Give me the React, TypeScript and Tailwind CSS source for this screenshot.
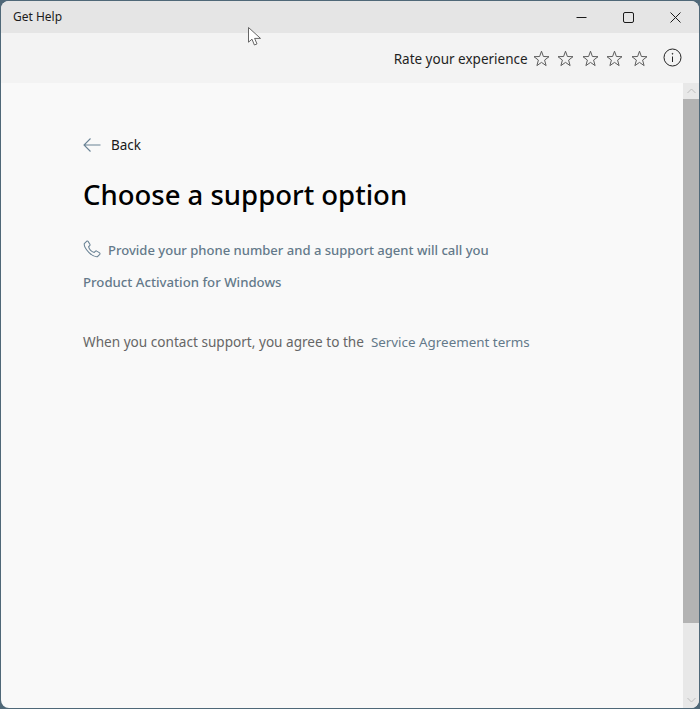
import React from 'react'

const font = { fontFamily: '"Noto Sans", sans-serif' }

function Star() {
  return (
    <svg width="17" height="17" viewBox="0 0 17 17" fill="none" stroke="#5c5c5c" strokeWidth="1" strokeLinejoin="round">
      <path d="M8.5 1.2 10.4 6.5 16 6.7 11.6 10.1 13.1 15.6 8.5 12.4 3.9 15.6 5.4 10.1 1 6.7 6.6 6.5Z" />
    </svg>
  )
}

function Cursor() {
  return (
    <svg className="absolute left-[248px] top-[27px]" width="14" height="20" viewBox="0 0 14 20" fill="#fff" stroke="#555" strokeWidth="0.9">
      <path d="M0.5 0.5V15.2L4 12.2 6.4 18 9 16.9 6.6 11.4H12.5Z" />
    </svg>
  )
}

export default function App() {
  return (
    <div className="relative h-[709px] w-[700px] overflow-hidden bg-[#4f6878]">
      <div className="ml-px mt-px flex h-[707px] w-[698px] flex-col overflow-hidden rounded-[8px] bg-[#f9f9f9]" style={font}>
        <div className="flex h-[32px] shrink-0 items-center justify-between bg-[#e5e5e5] pl-3 text-[#1c1c1c]">
          <span className="text-[12px]">Get Help</span>
          <div className="flex items-center">
            <div className="flex h-[32px] w-[47px] items-center justify-center">
              <svg width="11" height="11" viewBox="0 0 11 11" stroke="#1a1a1a" strokeWidth="1"><path d="M0.5 5.5H10.5" /></svg>
            </div>
            <div className="flex h-[32px] w-[47px] items-center justify-center">
              <svg width="11" height="11" viewBox="0 0 11 11" fill="none" stroke="#1a1a1a" strokeWidth="1"><rect x="0.5" y="0.5" width="10" height="10" rx="1.5" /></svg>
            </div>
            <div className="flex h-[32px] w-[47px] items-center justify-center">
              <svg width="11" height="11" viewBox="0 0 11 11" stroke="#1a1a1a" strokeWidth="1"><path d="M0.5 0.5 10.5 10.5M10.5 0.5 0.5 10.5" /></svg>
            </div>
          </div>
        </div>
        <div className="flex h-[50px] shrink-0 items-center justify-end bg-[#f3f3f3] pr-[17px]">
          <span className="mr-[5px] mt-[2px] text-[13.5px] text-[#1f1f1f]">Rate your experience</span>
          <div className="flex gap-[7.6px]">
            <Star /><Star /><Star /><Star /><Star />
          </div>
          <svg className="mb-[2px] ml-[15px]" width="19" height="19" viewBox="0 0 19 19" fill="none" stroke="#222" strokeWidth="1">
            <circle cx="9.5" cy="9.5" r="8.5" />
            <path d="M9.5 8.5V14" />
            <circle cx="9.5" cy="5.8" r="0.4" fill="#222" />
          </svg>
        </div>
        <div className="flex min-h-0 flex-1">
          <div className="flex-1 pl-[82px] pt-[50px]">
            <div className="flex h-[24px] items-center gap-[10px]">
              <svg className="mb-[1px]" width="18" height="14" viewBox="0 0 18 14" fill="none" stroke="#6b8496" strokeWidth="1.1"><path d="M17.5 7H1M7.5 0.5 1 7 7.5 13.5" /></svg>
              <span className="text-[13.5px] text-[#1a1a1a]">Back</span>
            </div>
            <h1 className="mt-[19px] text-[27.5px] leading-[38px] font-medium text-black">Choose a support option</h1>
            <div className="mt-[26px] flex h-[22px] items-center gap-[7px] text-[13.05px] font-medium text-[#64798a]">
              <svg className="mb-[4px]" width="18" height="18" viewBox="0 0 17 17" fill="none" stroke="#6b8496" strokeWidth="1"><path d="M1.2 3.5 3.4 1.2C3.9.8 4.5.9 4.8 1.3L6.5 4C6.8 4.5 6.7 5 6.3 5.4L5.3 6.4C5.9 8.6 8.2 11 10.6 11.7L11.6 10.7C12 10.3 12.6 10.2 13 10.5L15.7 12.2C16.1 12.5 16.2 13.1 15.8 13.6L13.6 15.8C9 16.4.6 8.2 1.2 3.5Z" /></svg>
              <span>Provide your phone number and a support agent will call you</span>
            </div>
            <div className="mt-[9px] text-[13.2px] leading-[22px] font-medium text-[#64798a]">Product Activation for Windows</div>
            <div className="mt-[38px] flex text-[13.6px] leading-[22px] text-[#666666]">
              <span>When you contact support, you agree to the</span>
              <span className="ml-[7px] text-[13.4px] text-[#64798a]">Service Agreement terms</span>
            </div>
          </div>
          <div className="flex w-[16px] shrink-0 flex-col bg-[#e8e8e8]">
            <div className="flex h-[16px] items-center justify-center">
              <svg width="9" height="6" viewBox="0 0 9 6" fill="none" stroke="#bdbdbd"><path d="M0.5 5 4.5 1 8.5 5" /></svg>
            </div>
            <div className="h-[524px] bg-[#b3b3b3]" />
            <div className="flex-1" />
            <div className="flex h-[16px] items-center justify-center">
              <svg width="9" height="6" viewBox="0 0 9 6" fill="none" stroke="#bdbdbd"><path d="M0.5 1 4.5 5 8.5 1" /></svg>
            </div>
          </div>
        </div>
      </div>
      <Cursor />
    </div>
  )
}
